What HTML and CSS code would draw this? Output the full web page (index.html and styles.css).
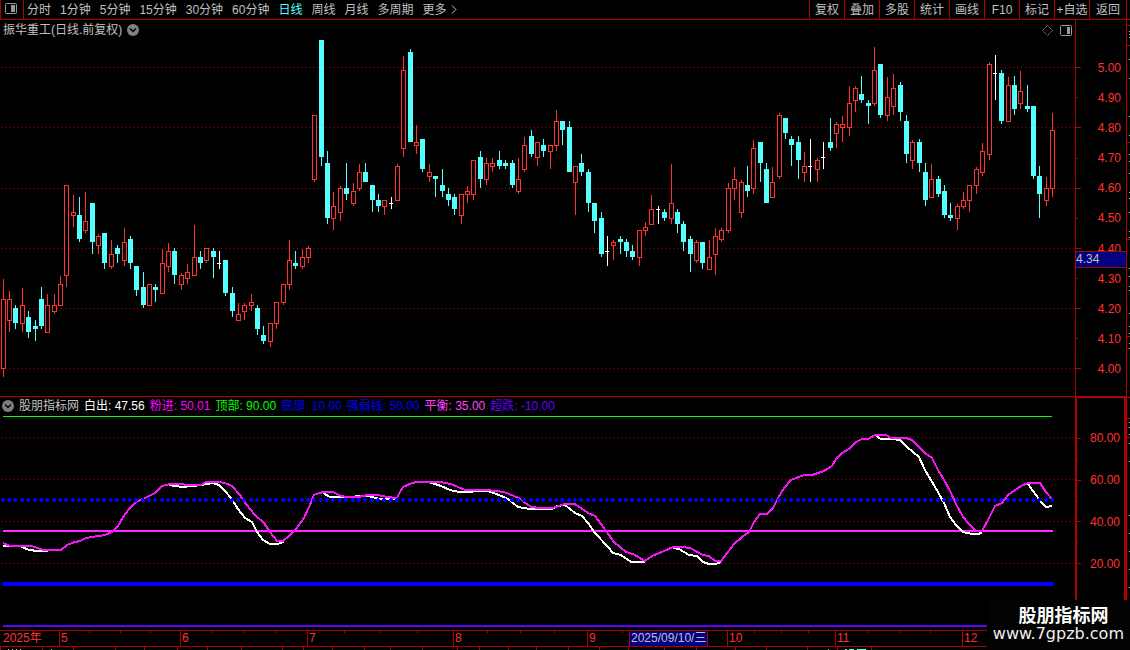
FILE: index.html
```html
<!DOCTYPE html>
<html lang="zh-CN">
<head>
  <meta charset="UTF-8">
  <title>振华重工 日线</title>
  <link rel="stylesheet" href="styles.css">
</head>
<body>
  <header class="toolbar">
    <button class="panel-toggle" aria-label="面板">
      <svg width="12" height="11" viewBox="0 0 12 11">
        <rect x="0.5" y="0.5" width="11" height="10" rx="1" fill="none" stroke="#999"/>
        <rect x="6" y="2" width="4" height="7" fill="#999"/>
      </svg>
    </button>
    <nav class="periods">
      <button>分时</button>
      <button>1分钟</button>
      <button>5分钟</button>
      <button>15分钟</button>
      <button>30分钟</button>
      <button>60分钟</button>
      <button class="active">日线</button>
      <button>周线</button>
      <button>月线</button>
      <button>多周期</button>
      <button class="more">更多
        <svg width="6" height="9" viewBox="0 0 6 9"><path d="M1 0.5L5 4.5L1 8.5" fill="none" stroke="#c0c0c0"/></svg>
      </button>
    </nav>
    <div class="tools">
      <button>复权</button>
      <button>叠加</button>
      <button>多股</button>
      <button>统计</button>
      <button>画线</button>
      <button>F10</button>
      <button>标记</button>
      <button>+自选</button>
      <button class="back">返回</button>
    </div>
  </header>

  <main class="workspace">
    <div class="panes">
      <section class="pane price-pane">
        <div class="plot">
          <svg class="chart" id="priceChart" viewBox="0 20 1075 376" preserveAspectRatio="none"></svg>
          <div class="pane-title">
            <span>振华重工(日线.前复权)</span>
            <svg width="12" height="12" viewBox="0 0 12 12">
              <circle cx="6" cy="6" r="6" fill="#808080"/>
              <path d="M3 4.5L6 7.5L9 4.5" fill="none" stroke="#000" stroke-width="1.5"/>
            </svg>
            <span class="pane-icons">
              <svg width="11" height="11" viewBox="0 0 11 11"><path d="M5.5 0.5L10.5 5.5L5.5 10.5L0.5 5.5Z" fill="none" stroke="#888" stroke-dasharray="1.4 0.6"/></svg>
              <svg width="12" height="11" viewBox="0 0 12 11">
                <rect x="0.5" y="0.5" width="11" height="10" rx="1" fill="none" stroke="#999"/>
                <rect x="7" y="2" width="3" height="7" fill="#999"/>
              </svg>
            </span>
          </div>
        </div>
        <div class="axis price-axis">
          <svg class="ticks" id="priceTicks" viewBox="0 20 50 376" preserveAspectRatio="none"></svg>
          <div class="axis-labels">
            <span>5.00</span><span>4.90</span><span>4.80</span><span>4.70</span><span>4.60</span>
            <span>4.50</span><span>4.40</span><span>4.30</span><span>4.20</span><span>4.10</span><span>4.00</span>
          </div>
          <div class="price-cursor">4.34</div>
        </div>
      </section>

      <section class="pane indicator-pane">
        <div class="plot">
          <svg class="chart" id="indicatorChart" viewBox="0 397 1075 233" preserveAspectRatio="none"></svg>
          <div class="pane-title legend">
            <svg width="12" height="12" viewBox="0 0 12 12">
              <circle cx="6" cy="6" r="6" fill="#808080"/>
              <path d="M3 4.5L6 7.5L9 4.5" fill="none" stroke="#000" stroke-width="1.5"/>
            </svg>
            <span>股朋指标网</span>
            <span class="white">白出: 47.56</span>
            <span class="pink">粉进: 50.01</span>
            <span class="green">顶部: 90.00</span>
            <span class="blue">底部: 10.00</span>
            <span class="blue">强弱线: 50.00</span>
            <span class="balance">平衡: 35.00</span>
            <span class="violet">超跌: -10.00</span>
          </div>
        </div>
        <div class="axis indicator-axis">
          <svg class="ticks" id="indicatorTicks" viewBox="0 397 50 233" preserveAspectRatio="none"></svg>
          <div class="axis-labels">
            <span>80.00</span><span>60.00</span><span>40.00</span><span>20.00</span>
          </div>
        </div>
      </section>

      <div class="time-axis">
        <svg class="ticks" id="timeTicks" viewBox="0 630 1126 20" preserveAspectRatio="none"></svg>
        <div class="months">
          <span>2025年</span><span>5</span><span>6</span><span>7</span><span>8</span>
          <span>9</span><span>10</span><span>11</span><span>12</span>
        </div>
        <div class="date-cursor">2025/09/10/三</div>
      </div>
    </div>
    <aside class="side-strip">
      <svg class="chart" id="sideMarks" viewBox="0 20 3 630" preserveAspectRatio="none"></svg>
    </aside>
  </main>

  <div class="watermark">
    <strong>股朋指标网</strong>
    <span>www.7gpzb.com</span>
  </div>

  <script src="chart.js"></script>
</body>
</html>
```

FILE: styles.css
```css
* {
  box-sizing: border-box;
}
body {
  margin: 0;
  height: 100vh;
  display: flex;
  flex-direction: column;
  overflow: hidden;
  position: relative;
  background: #000;
  color: #c0c0c0;
  font: 12px/14px "Liberation Sans", "Noto Sans CJK SC", sans-serif;
}
svg {
  display: block;
}
button {
  margin: 0;
  padding: 0;
  border: none;
  background: none;
  color: inherit;
  font: inherit;
  white-space: nowrap;
  cursor: pointer;
}

/* toolbar */
.toolbar {
  display: flex;
  flex: none;
  height: 20px;
  padding-right: 3px;
  border-bottom: 1px solid #b00000;
}
.panel-toggle {
  width: 24px;
  display: flex;
  align-items: center;
  padding: 0 0 2px 4px;
  border-left: 1px solid #b00000;
  border-right: 1px solid #b00000;
}
.periods {
  display: flex;
  gap: 9px;
  padding-left: 3px;
}
.periods .active {
  color: #54ffff;
}
.periods .more {
  display: flex;
  align-items: center;
  gap: 4px;
}
.tools {
  display: flex;
  margin-left: auto;
}
.tools button {
  width: 35px;
  border-left: 1px solid #b00000;
}
.tools .back {
  width: 38px;
  border-right: 1px solid #b00000;
}

/* panes */
.workspace {
  display: flex;
  flex: 1;
  min-height: 0;
}
.panes {
  display: flex;
  flex-direction: column;
  flex: 1;
  min-width: 0;
}
.pane {
  display: grid;
  grid-template-columns: 1fr 51px;
  min-height: 0;
}
.price-pane {
  flex: 376 1 0;
}
.indicator-pane {
  flex: 234 1 0;
}
.plot, .axis, .time-axis {
  display: grid;
  grid-template: minmax(0, 1fr) / minmax(0, 1fr);
  min-height: 0;
}
.plot > *, .axis > *, .time-axis > * {
  grid-area: 1 / 1;
}
.chart, .ticks {
  width: 100%;
  height: 100%;
  min-height: 0;
}
.indicator-pane .plot {
  border-top: 1px solid #b00000;
}
.pane-title {
  display: flex;
  align-items: center;
  align-self: start;
  gap: 5px;
  padding: 3px 3px 0;
  white-space: nowrap;
}
.pane-icons {
  display: flex;
  gap: 7px;
  margin-left: auto;
}
.legend {
  padding: 2px 2px 0;
  gap: 5px;
}
.white { color: #fff; }
.pink { color: #f0f; }
.green { color: #0f0; }
.blue { color: #00f; }
.balance { color: #ff40ff; }
.violet { color: #6000ff; }

/* axes */
.axis {
  position: relative;
  color: #ff3232;
}
.price-axis {
  border-left: 1px solid #b00000;
}
.indicator-axis {
  border: 2px solid #b00000;
  border-bottom: none;
}
.axis-labels {
  display: flex;
  flex-direction: column;
  justify-content: space-between;
  padding: 41px 5px 20px 0;
  text-align: right;
}
.indicator-axis .axis-labels {
  padding: 33px 4px 59px 0;
}
.price-cursor {
  position: absolute;
  top: 231px;
  left: 0;
  right: 0;
  padding-bottom: 1px;
  background: #000080;
  border: solid #b00000;
  border-width: 1px 0;
  color: #c0c0c0;
}
.time-axis {
  flex: none;
  height: 20px;
  position: relative;
  color: #ff3232;
}
.months {
  display: grid;
  grid-template-columns: 59fr 121fr 127fr 146fr 134fr 140fr 108fr 127fr 164fr;
  height: 17px;
  border-top: 1px solid #b00000;
  border-bottom: 1px solid #b00000;
}
.months span {
  padding-left: 1px;
  border-left: 1px solid #b00000;
}
.months span:first-child {
  padding-left: 3px;
  border-left: none;
}
.date-cursor {
  position: absolute;
  top: 1px;
  left: 629px;
  height: 15px;
  padding: 0 1px;
  background: #000080;
  border-left: 1px solid #b00000;
  border-right: 1px solid #b00000;
  color: #c0c0c0;
  white-space: nowrap;
}
.side-strip {
  width: 4px;
  border-left: 1px solid #b00000;
}

.watermark {
  position: absolute;
  right: 0;
  bottom: 0;
  display: flex;
  flex-direction: column;
  align-items: center;
  padding: 5px 6px 7px;
  background: #020202;
  color: #f4eef0;
  font-family: "DejaVu Sans", "Noto Sans CJK SC", sans-serif;
  font-size: 16px;
  line-height: 19px;
}
.watermark strong {
  padding-left: 10px;
  color: #fff;
  font-family: "Noto Sans CJK SC", sans-serif;
  font-size: 18px;
}
```

FILE: chart.js
```js
// type (r = up, c = down, w = flat), high, top, bottom, low
const candles = `
r 279 299 369 377|r 291 299 321 332|c 305 308 323 329|r 288 305 324 332|c 311 317 332 338|c 320 326 329 341
c 287 299 326 329|r 294 305 333 333|r 294 305 312 314|r 276 284 306 306|r 185 185 276 287|r 195 212 216 227
c 197 215 239 242|r 192 221 231 233|c 203 203 242 254|r 234 236 246 254|c 233 233 263 269|r 240 254 267 269
c 245 248 254 263|r 228 242 261 266|c 236 239 263 269|c 266 266 290 296|c 272 287 305 308|r 284 284 306 306
c 284 287 290 302|r 249 263 294 294|r 243 251 267 272|c 248 251 275 284|r 273 275 285 290|r 264 272 279 284
r 225 257 276 276|c 251 257 263 269|r 248 248 261 263|c 248 251 257 278|w 251 263 264 269|c 260 260 293 296
c 287 293 311 317|r 303 314 321 321|r 303 305 312 320|r 294 302 306 311|c 305 308 329 335|c 326 335 341 344
r 323 323 342 347|r 302 302 324 329|r 284 284 303 305|r 240 260 285 290|c 251 263 266 269|r 249 257 267 269
r 246 248 258 263|r 115 115 180 182|c 40 40 157 166|c 151 163 218 224|r 192 206 219 230|r 186 188 213 221
c 163 188 194 200|r 183 191 204 206|r 164 172 189 191|c 163 172 182 182|c 185 185 200 212|c 194 200 206 212
r 200 200 207 215|w 197 203 204 209|r 164 166 201 201|r 56 70 149 157|c 49 52 142 142|r 125 142 146 154
c 139 139 169 172|r 164 172 177 182|c 176 176 179 197|c 169 185 191 197|c 188 194 200 206|c 194 197 209 215
r 194 194 216 224|r 186 191 195 203|r 160 160 195 200|c 151 157 179 188|r 158 163 180 185|r 158 163 167 172
c 151 160 166 169|c 160 163 166 169|c 160 163 185 188|r 158 179 192 194|r 137 145 170 172|c 130 136 154 157
r 142 142 158 166|c 139 145 151 157|r 145 145 152 169|r 110 121 146 151|c 121 121 130 145|c 121 127 172 172
r 166 166 183 215|c 154 163 172 176|c 169 172 203 212|c 203 203 221 233|c 212 218 254 257|w 236 251 252 266
r 240 242 246 260|c 236 239 242 254|c 239 242 251 257|c 245 251 257 260|r 230 230 258 266|r 222 227 231 236
r 195 209 225 225|w 206 209 210 224|c 209 212 218 221|r 164 203 219 224|c 209 212 224 233|c 221 224 242 251
c 236 239 254 272|r 240 242 261 263|c 242 242 263 269|r 240 257 270 270|r 228 236 255 275|r 228 230 240 242
r 183 188 231 233|r 167 179 189 200|r 180 182 213 218|c 166 185 191 197|r 140 148 189 194|c 142 142 163 182
c 163 169 203 203|r 167 182 198 198|r 113 115 177 179|c 118 118 133 139|c 136 139 145 166|c 136 142 160 179
r 152 166 173 182|w 139 166 167 182|r 158 160 170 182|w 142 157 158 169|c 118 142 148 151|r 122 124 134 148
r 116 124 128 142|r 86 103 128 136|r 86 88 101 112|c 76 94 100 103|c 100 103 106 124|r 47 70 104 106
c 64 64 115 118|r 77 97 116 121|r 74 88 107 115|c 82 85 112 121|c 115 121 154 163|r 140 142 161 169
c 139 142 163 172|c 163 172 200 206|r 164 179 198 198|c 176 179 194 197|c 185 191 215 218|c 203 215 218 221
r 204 206 219 230|r 192 200 207 209|r 185 185 201 212|r 167 169 186 194|r 143 151 173 176|r 62 64 155 160
w 55 73 74 100|c 70 73 121 124|r 77 85 122 122|c 76 85 109 115|r 71 91 104 109|c 85 106 109 112
c 106 106 176 179|c 166 176 194 218|r 177 188 201 206|r 113 130 189 197`.trim().split(/[|\n]/).map(row => row.split(" "));

const STEP = 6.3604;
const colors = { r: "#ff3232", c: "#54ffff", w: "#ffffff" };
const RED = "#b00000";

const pink = "3,543 10,546 32,546 37,548 44,550 61,550 67,545 75,542 80,541 86,538 92,537 105,535 112,532 118,526 123,517 129,509 136,502 145,498 155,493 162,486 170,484 181,484 187,485 201,485 206,482 219,482 225,483 232,486 240,495 246,504 255,515 264,523 270,532 277,541 283,541 289,536 296,529 304,518 309,507 314,495 319,493 324,492 333,492 341,496 347,497 358,497 368,495 378,495 387,497 397,498 400,492 403,487 412,483 417,482 440,482 451,484 458,487 465,490 486,490 504,492 519,498 524,502 531,507 540,508 553,508 558,506 565,504 575,504 588,513 595,516 601,524 614,542 626,552 633,554 645,561 652,556 664,551 673,547 682,547 690,548 703,555 709,556 715,561 721,561 734,544 742,537 749,532 754,522 760,514 767,514 773,508 778,498 784,488 791,480 804,475 812,475 824,471 832,466 836,459 842,453 849,449 856,442 862,439 868,439 875,435 886,435 891,438 906,438 912,440 919,447 925,453 932,458 938,470 943,478 951,493 956,504 963,517 969,524 976,531 982,531 989,518 995,506 1002,503 1008,495 1021,486 1028,483 1040,483 1046,492 1052,499";
const white = [
  "3,546 20,546 29,550 38,551 48,551",
  "169,485 182,487 193,486 201,485 213,483 219,485 225,491 231,498 238,509 245,518 252,522 257,532 263,540 270,544 277,544 284,542",
  "323,493 330,497 342,497 368,496 380,499 396,499",
  "429,482 441,486 450,490 459,492 488,491 499,495 508,499 518,507 530,509 552,509 557,506 565,505 575,513 582,516 588,523 595,533 608,547 613,553 621,555 631,562 645,562",
  "673,548 679,549 689,555 697,556 703,562 709,564 716,564 721,562",
  "876,436 881,439 893,439 900,440 907,447 919,457 925,470 938,492 944,503 950,517 956,525 963,532 972,534 979,534 982,532",
  "1028,484 1041,502 1046,507 1052,506"
];

function rect(x, y, w, h, fill) {
  return `<rect x="${x}" y="${y}" width="${w}" height="${h}" fill="${fill}"/>`;
}
function dotted(y) {
  return `<path d="M1 ${y + 0.5}H1075" stroke="${RED}" stroke-dasharray="1 3"/>`;
}
function draw(id, content) {
  document.getElementById(id).innerHTML = `<g shape-rendering="crispEdges">${content}</g>`;
}

// Price pane
let price = [67, 127, 188, 248, 308, 368].map(dotted).join("");
candles.forEach(([type, ...values], i) => {
  const [high, top, bottom, low] = values.map(Number);
  const x = Math.floor(3.2 + i * STEP);
  const color = colors[type];
  price += rect(x, high, 1, low - high, color);
  if (type === "r") {
    price += rect(x - 2, top, 5, bottom - top, color);
    price += rect(x - 1, top + 1, 3, Math.max(bottom - top - 2, 1), "#000");
  } else {
    price += rect(x - 2, top, type === "w" ? 4 : 5, bottom - top, color);
  }
});
draw("priceChart", price);

// Indicator pane
let indicator = [437, 479, 521, 563].map(dotted).join("");
indicator += rect(3, 416, 1049, 1, "#00ff00");
indicator += rect(3, 530, 1050, 2, "#ff28ff");
indicator += rect(2, 582, 1052, 4, "#0000ff");
indicator += rect(3, 625, 1050, 2, "#6000ff");
white.forEach(points => {
  indicator += `<polyline points="${points}" fill="none" stroke="#fff" stroke-width="2"/>`;
});
indicator += `<polyline points="${pink}" fill="none" stroke="#f815f8" stroke-width="2"/>`;
for (let i = 0; i < candles.length; i++) {
  const x = Math.floor(3.2 + i * STEP);
  indicator += rect(x - 2, 499, 4, 2, "#0000ff") + rect(x - 1, 498, 2, 4, "#0000ff");
}
draw("indicatorChart", indicator);

// Axis ticks
draw("priceTicks",
  [67, 127, 188, 248, 308, 368].map(y => rect(0, y, 5, 1, RED)).join("") +
  [97, 158, 218, 278, 338].map(y => rect(0, y, 2, 1, RED)).join(""));
draw("indicatorTicks",
  [437, 479, 521, 563].map(y => rect(0, y, 4, 1, RED)).join("") +
  [458, 500, 542].map(y => rect(0, y, 1, 1, RED)).join(""));
draw("timeTicks",
  [89, 120, 150, 212, 244, 275, 344, 380, 417, 487, 520, 554, 622, 754, 781, 808, 867, 899, 930]
    .map(x => rect(x, 631, 1, 2, RED)).join("") +
  [0, 42, 73, 115, 144, 177, 207, 241, 282, 303, 332, 364, 390, 422, 457, 479, 508, 536, 568, 599, 628, 664, 696, 735, 766, 807, 837, 871]
    .map(x => rect(x, 647, 1, 3, RED)).join("") +
  [8, 12, 16, 20, 51, 828].map(x => rect(x, 649, 1, 1, "#c0c0c0")).join("") +
  [[845, 2], [849, 5], [857, 9]].map(([x, w]) => rect(x, 649, w, 1, "#54ffff")).join(""));

// Edge of the quote list on the right
draw("sideMarks",
  [25, 45, 142, 239, 336, 397, 418, 437].map(y => rect(0, y, 3, 1, RED)).join("") +
  [31, 34, 37, 59, 78, 116, 135, 154, 161, 173, 192, 198, 212, 231, 237, 268, 276, 286, 290, 313, 326, 333, 343, 348, 422, 427, 434, 443, 461, 515, 533, 551, 569, 587]
    .map(y => rect(2, y, 1, 1, "#c0c0c0")).join(""));
```
